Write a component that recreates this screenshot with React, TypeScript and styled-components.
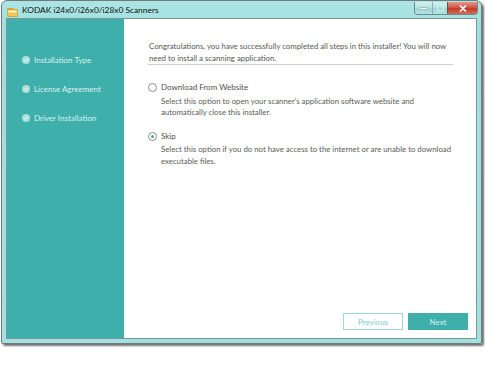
import React from "react";
import styled, { createGlobalStyle } from "styled-components";

const Global = createGlobalStyle`
  html, body { margin: 0; padding: 0; background: #ffffff; }
  body { font-family: Lato, "Open Sans", sans-serif; }
`;

const Page = styled.div`
  width: 485px;
  height: 369px;
  background: #ffffff;
  padding-left: 1px;
  box-sizing: border-box;
`;

const Window = styled.div`
  width: 481px;
  height: 344px;
  box-sizing: border-box;
  border: 1px solid #6d7b7c;
  border-radius: 6px 6px 2px 2px;
  background: linear-gradient(180deg, #ace5e4 0%, #9fdfde 8%, #a2e1e0 100%);
  box-shadow: 2px 2px 2px rgba(0, 0, 0, 0.55);
  display: flex;
  flex-direction: column;
`;

const TitleBar = styled.div`
  height: 17px;
  display: flex;
  align-items: flex-start;
  padding: 0 3px 0 5px;
`;

const AppIcon = styled.svg`
  width: 11px;
  height: 10px;
  margin-top: 6px;
  flex: none;
`;

const Title = styled.div`
  margin-left: 4px;
  margin-top: 4px;
  font-family: Lato, sans-serif;
  font-size: 8.4px;
  line-height: 11px;
  color: #111;
  flex: 1;
`;

const Controls = styled.div`
  display: flex;
  height: 12px;
  margin-top: 1px;
  border: 1px solid #6f8c8d;
  border-top: none;
  border-radius: 0 0 4px 4px;
  overflow: hidden;
`;

const CtrlButton = styled.div<{ $w: number; $close?: boolean }>`
  width: ${(p) => p.$w}px;
  height: 12px;
  display: flex;
  align-items: center;
  justify-content: center;
  box-sizing: border-box;
  border-left: ${(p) => (p.$close ? "1px solid #7a4a44" : "1px solid #86b2b3")};
  &:first-child { border-left: none; }
  background: ${(p) =>
    p.$close
      ? "linear-gradient(180deg, #e6978c 0%, #cf5a49 45%, #c13c2b 55%, #d56a55 100%)"
      : "linear-gradient(180deg, #d6f1f1 0%, #b6e3e3 45%, #9fd6d6 55%, #b3e4e4 100%)"};
`;

const Client = styled.div`
  flex: 1;
  margin: 0 4px 4px 4px;
  border: 1px solid #7f9696;
  display: flex;
  background: #ffffff;
`;

const Sidebar = styled.div`
  width: 117px;
  background: #3fafac;
  padding-top: 26px;
  box-sizing: border-box;
  flex: none;
`;

const StepItem = styled.div`
  height: 29px;
  display: flex;
  align-items: center;
  padding-left: 15px;
  gap: 4px;
  font-size: 8px;
  color: #d9f1f0;
`;

const StepCheck = styled.svg`
  width: 8px;
  height: 8px;
  flex: none;
`;

const Main = styled.div`
  flex: 1;
  display: flex;
  flex-direction: column;
`;

const Body = styled.div`
  padding: 22px 23px 0 24px;
  font-size: 7.8px;
  line-height: 11.5px;
  color: #565656;
`;

const Intro = styled.p`
  margin: 0;
  padding: 0 0 0 1px;
  border-bottom: 1px solid #cfcfcf;
`;

const Option = styled.div<{ $gap: number }>`
  margin-top: ${(p) => p.$gap}px;
`;

const OptionLabel = styled.div`
  display: flex;
  align-items: center;
  gap: 4px;
  color: #505050;
  font-size: 8px;
`;

const Radio = styled.span<{ $checked?: boolean }>`
  width: 9px;
  height: 9px;
  box-sizing: border-box;
  border-radius: 50%;
  border: 1px solid #8a8a8a;
  background: #fff;
  display: flex;
  align-items: center;
  justify-content: center;
  flex: none;
  &::after {
    content: "";
    width: 3px;
    height: 3px;
    border-radius: 50%;
    background: ${(p) => (p.$checked ? "#4f9d9c" : "transparent")};
  }
`;

const OptionDesc = styled.p`
  margin: 2px 0 0 13px;
  color: #5a5a5a;
`;

const Footer = styled.div`
  margin-top: auto;
  display: flex;
  justify-content: flex-end;
  gap: 5px;
  padding: 0 8px 8px 0;
`;

const Button = styled.button<{ $primary?: boolean }>`
  width: 60px;
  height: 17px;
  box-sizing: border-box;
  font-family: Lato, sans-serif;
  font-size: 8px;
  padding: 0;
  border: 1px solid ${(p) => (p.$primary ? "#3fafac" : "#9fd8d7")};
  background: ${(p) => (p.$primary ? "#3fafac" : "#ffffff")};
  color: ${(p) => (p.$primary ? "#d3f0ef" : "#7fcbca")};
`;

const steps = ["Installation Type", "License Agreement", "Driver Installation"];

export default function App() {
  return (
    <Page>
      <Global />
      <Window>
        <TitleBar>
          <AppIcon viewBox="0 0 11 10">
            <rect x="0.5" y="1" width="6" height="3" fill="#e0a629" />
            <rect x="0.5" y="2.5" width="10" height="7" rx="0.5" fill="#f3c64b" stroke="#c4912a" strokeWidth="0.6" />
            <rect x="1.5" y="3.5" width="8" height="2" fill="#ffffff" opacity="0.7" />
          </AppIcon>
          <Title>KODAK i24x0/i26x0/i28x0 Scanners</Title>
          <Controls>
            <CtrlButton $w={17}>
              <svg width="7" height="3" viewBox="0 0 7 3">
                <rect x="0" y="0.5" width="7" height="2" fill="#ffffff" stroke="#6f8f90" strokeWidth="0.5" />
              </svg>
            </CtrlButton>
            <CtrlButton $w={15}>
              <svg width="7" height="6" viewBox="0 0 7 6">
                <rect x="0.5" y="0.5" width="6" height="5" fill="none" stroke="#cfeeee" strokeWidth="1" />
              </svg>
            </CtrlButton>
            <CtrlButton $w={30} $close>
              <svg width="8" height="7" viewBox="0 0 8 7">
                <path d="M1 0.5 L7 6.5 M7 0.5 L1 6.5" stroke="#ffffff" strokeWidth="1.6" />
              </svg>
            </CtrlButton>
          </Controls>
        </TitleBar>
        <Client>
          <Sidebar>
            {steps.map((s) => (
              <StepItem key={s}>
                <StepCheck viewBox="0 0 8 8">
                  <circle cx="4" cy="4" r="4" fill="#a9dfdc" />
                  <path d="M2.2 4.1 L3.5 5.3 L5.9 2.8" stroke="#ffffff" strokeWidth="1" fill="none" />
                </StepCheck>
                {s}
              </StepItem>
            ))}
          </Sidebar>
          <Main>
            <Body>
              <Intro>
                Congratulations, you have successfully completed all steps in this installer! You will now need to
                install a scanning application.
              </Intro>
              <Option $gap={17}>
                <OptionLabel>
                  <Radio />
                  Download From Website
                </OptionLabel>
                <OptionDesc>
                  Select this option to open your scanner's application software website and automatically close this
                  installer.
                </OptionDesc>
              </Option>
              <Option $gap={12}>
                <OptionLabel>
                  <Radio $checked />
                  Skip
                </OptionLabel>
                <OptionDesc>
                  Select this option if you do not have access to the internet or are unable to download executable
                  files.
                </OptionDesc>
              </Option>
            </Body>
            <Footer>
              <Button>Previous</Button>
              <Button $primary>Next</Button>
            </Footer>
          </Main>
        </Client>
      </Window>
    </Page>
  );
}
